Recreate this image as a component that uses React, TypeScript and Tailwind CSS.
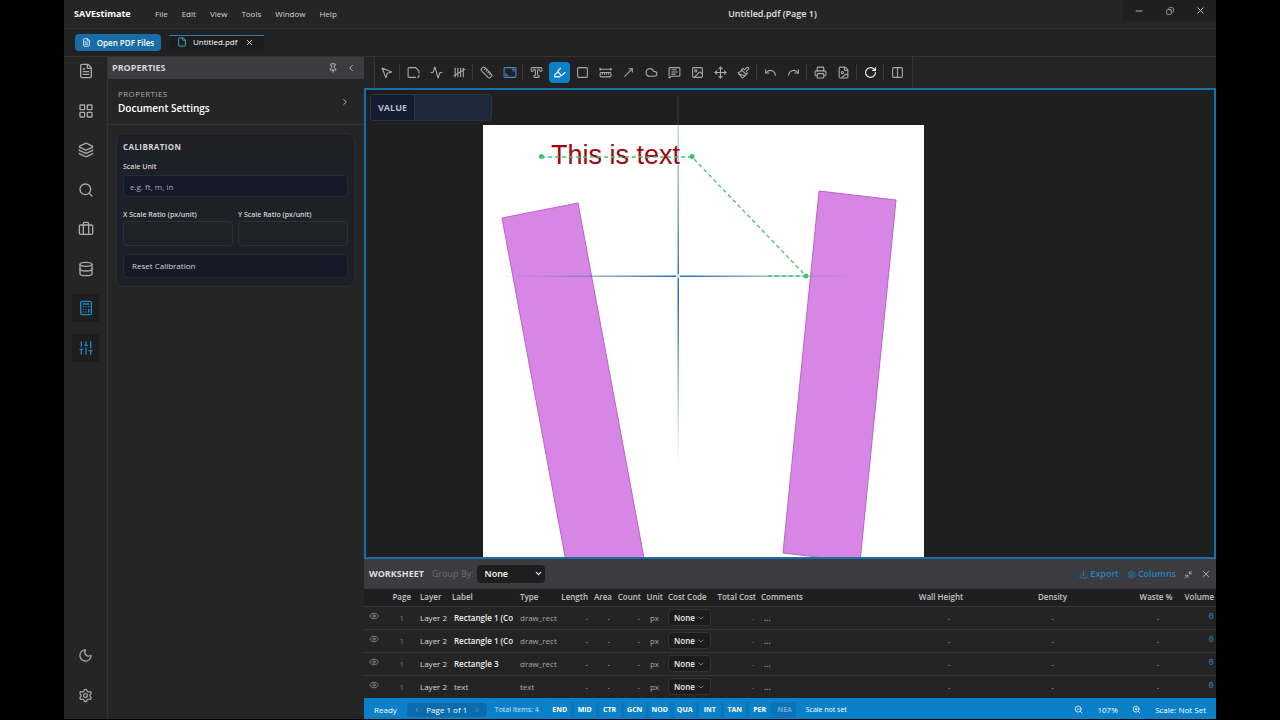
import type { ReactNode } from 'react';
import {
    Activity, Briefcase, Calculator, ChevronDown, ChevronLeft, ChevronRight, Cloud, Columns2, Copy,
    Database, Download, Eye, File, FileImage, FileText, Highlighter, Image, Layers, LayoutGrid, MessageSquareText,
    Minimize2, Minus, Moon, MousePointer2, Move, MoveUpRight, Paintbrush, Pin, Printer, Redo, RotateCw, Ruler,
    RulerDimensionLine, Search, Settings, SlidersVertical, Square, Tally5, TypeOutline, Undo, X, ZoomIn, ZoomOut,
} from 'lucide-react';

const AreaIcon = () => (
    <svg width="13" height="13" viewBox="0 0 24 24" fill="none" stroke="currentColor" strokeWidth="2" strokeLinecap="round" strokeLinejoin="round">
        <path d="M22 13V9l-6-6H4a2 2 0 0 0-2 2v14a2 2 0 0 0 2 2h12M22 17v2a2 2 0 0 1-2 2" />
    </svg>
);

const CalibrateIcon = () => (
    <svg width="14" height="13" viewBox="0 0 26 24" fill="none" stroke="currentColor" strokeWidth="2" strokeLinecap="round" strokeLinejoin="round">
        <rect x="2" y="3" width="22" height="18" rx="2" />
        <path d="M17 6h4v4zM5 14v4h4z" fill="currentColor" strokeWidth="1" />
    </svg>
);

const tools: { label: string; icon: ReactNode; tone?: string }[][] = [
    [{ label: 'Select', icon: <MousePointer2 size={13} /> }],
    [
        { label: 'Area', icon: <AreaIcon /> },
        { label: 'Polyline', icon: <Activity size={13} /> },
        { label: 'Count', icon: <Tally5 size={13} /> },
    ],
    [
        { label: 'Measure', icon: <Ruler size={13} /> },
        { label: 'Calibrate', icon: <CalibrateIcon />, tone: 'text-[#4a86d0]' },
    ],
    [
        { label: 'Text', icon: <TypeOutline size={13} /> },
        { label: 'Highlighter', icon: <Highlighter size={13} />, tone: 'bg-[#0a80c8] text-white' },
        { label: 'Rectangle', icon: <Square size={13} /> },
        { label: 'Dimension', icon: <RulerDimensionLine size={13} /> },
        { label: 'Arrow', icon: <MoveUpRight size={13} /> },
        { label: 'Cloud', icon: <Cloud size={13} /> },
        { label: 'Note', icon: <MessageSquareText size={13} /> },
        { label: 'Image', icon: <Image size={13} /> },
        { label: 'Move', icon: <Move size={13} /> },
        { label: 'Format', icon: <Paintbrush size={13} /> },
    ],
    [
        { label: 'Undo', icon: <Undo size={13} /> },
        { label: 'Redo', icon: <Redo size={13} /> },
    ],
    [
        { label: 'Print', icon: <Printer size={13} /> },
        { label: 'Export page', icon: <FileImage size={13} /> },
    ],
    [{ label: 'Refresh', icon: <RotateCw size={13} />, tone: 'text-white' }],
    [{ label: 'Split view', icon: <Columns2 size={13} /> }],
];

const sideItems = [
    { label: 'Files', icon: FileText },
    { label: 'Thumbnails', icon: LayoutGrid },
    { label: 'Layers', icon: Layers },
    { label: 'Search', icon: Search },
    { label: 'Projects', icon: Briefcase },
    { label: 'Database', icon: Database },
    { label: 'Worksheet', icon: Calculator, active: true },
    { label: 'Properties', icon: SlidersVertical, active: true },
];

const rows = [
    { label: 'Rectangle 1 (Copy)', type: 'draw_rect', bold: true },
    { label: 'Rectangle 1 (Copy)', type: 'draw_rect', bold: true },
    { label: 'Rectangle 3', type: 'draw_rect', bold: true },
    { label: 'text', type: 'text', bold: false },
];

const snaps = ['END', 'MID', 'CTR', 'GCN', 'NOD', 'QUA', 'INT', 'TAN', 'PER'];

function TitleBar() {
    return (
        <header className="flex h-[29px] shrink-0 items-center border-b border-[#333] pl-2.5">
            <div className="flex w-[348px] items-center">
                <h1 className="w-[81px] text-[9px] font-bold text-white">SAVEstimate</h1>
                <nav className="flex gap-3.5 text-[8px] font-medium text-[#d4d4d4]">
                    {['File', 'Edit', 'View', 'Tools', 'Window', 'Help'].map((item) => (
                        <button key={item}>{item}</button>
                    ))}
                </nav>
            </div>
            <div className="flex-1 text-center text-[9px] font-semibold text-[#e2e2e2]">Untitled.pdf (Page 1)</div>
            <div className="flex h-[21px] self-start bg-[#1f1f1f] text-[#ccc]">
                <button aria-label="Minimize" className="flex w-[31px] items-center justify-center"><Minus size={10} /></button>
                <button aria-label="Restore" className="flex w-[31px] items-center justify-center"><Copy size={8} className="-scale-x-100" /></button>
                <button aria-label="Close" className="flex w-[31px] items-center justify-center"><X size={11} /></button>
            </div>
        </header>
    );
}

function TabBar() {
    return (
        <div className="flex h-7 shrink-0 items-center border-b border-[#333] bg-[#212121] pl-[11px]">
            <button className="flex h-[17px] w-[86px] items-center justify-center gap-1.5 rounded-sm bg-[#186da8] text-[8px] font-semibold text-white">
                <FileText size={9} /> Open PDF Files
            </button>
            <div className="ml-2 flex h-4 w-[95px] items-center gap-1.5 border-t border-[#2d78b5] bg-[#1d1d1d] pb-0.5 pl-2 text-[8px] font-medium text-white">
                <File size={10} className="text-[#2fc7c4]" />
                Untitled.pdf
                <button aria-label="Close tab" className="ml-0.5"><X size={9} /></button>
            </div>
        </div>
    );
}

function SideBar() {
    return (
        <aside className="flex w-11 shrink-0 flex-col items-center border-r border-[#333] pb-2.5 text-[#aaa]">
            <div className="flex h-[305px] flex-col justify-between">
                {sideItems.map(({ label, icon: Icon, active }) => (
                    <button
                        key={label}
                        aria-label={label}
                        className={active ? 'flex h-7 w-[27px] items-center justify-center bg-[#1e1e1e] text-[#2186c8]' : 'flex h-7 w-[27px] items-center justify-center'}
                    >
                        <Icon size={16} />
                    </button>
                ))}
            </div>
            <div className="mt-auto flex flex-col gap-3">
                <button aria-label="Theme" className="flex h-7 w-[27px] items-center justify-center"><Moon size={15} /></button>
                <button aria-label="Settings" className="flex h-7 w-[27px] items-center justify-center"><Settings size={15} /></button>
            </div>
        </aside>
    );
}

function PropertiesPanel() {
    return (
        <section className="w-64 shrink-0">
            <div className="flex h-[22px] items-center bg-[#3c3c40] pr-2 pl-1 text-[#d4d4d4]">
                <h2 className="flex-1 text-[9px] font-bold">PROPERTIES</h2>
                <button aria-label="Pin panel" className="mr-2"><Pin size={10} /></button>
                <button aria-label="Collapse panel"><ChevronLeft size={10} /></button>
            </div>
            <div className="flex h-[46px] items-center border-b border-[#333] pr-3.5 pl-2.5">
                <div className="flex-1">
                    <div className="text-[8px] leading-3 tracking-wider text-[#aaa]">PROPERTIES</div>
                    <h3 className="text-[10px] leading-4 font-semibold text-white">Document Settings</h3>
                </div>
                <ChevronRight size={10} className="text-[#ccc]" />
            </div>
            <form className="mt-2 mr-[9px] ml-2 rounded-lg border border-[#2b2e37] bg-[#1e2027] px-1.5 pt-[7px] pb-2 text-[#d4d4d4]">
                <h4 className="text-[8px] leading-3 font-bold tracking-wider">CALIBRATION</h4>
                <label htmlFor="unit" className="mt-2 block text-[7px] leading-3 font-semibold">Scale Unit</label>
                <input id="unit" placeholder="e.g. ft, m, in" className="mt-0.5 block h-[22px] w-full rounded border border-[#262b3a] bg-[#151a28] px-1.5 text-[8px] placeholder:text-[#a5a8b0]" />
                <div className="mt-3 grid grid-cols-2 gap-[5px] text-[7px] font-semibold">
                    <label className="leading-3 whitespace-nowrap">
                        X Scale Ratio (px/unit)
                        <input className="block h-[25px] w-full rounded border border-[#2d3038] bg-[#1f2127]" />
                    </label>
                    <label className="leading-3 whitespace-nowrap">
                        Y Scale Ratio (px/unit)
                        <input className="block h-[25px] w-full rounded border border-[#2d3038] bg-[#1f2127]" />
                    </label>
                </div>
                <button type="button" className="mt-2 block h-6 w-full rounded border border-[#262b3a] bg-[#171a26] px-2 text-left text-[8px] font-medium">Reset Calibration</button>
            </form>
        </section>
    );
}

function ToolBar() {
    return (
        <div className="flex h-[31px] shrink-0 bg-[#242424]">
            <div className="ml-2.5 flex items-center gap-0.5 border-x border-[#333] bg-[#212121] pr-1 pb-px pl-px text-[#aaa]">
                {tools.map((group, index) => (
                    <div key={index} className="flex items-center gap-0.5">
                        {index > 0 && <span className="h-4 w-0.5 border-l border-[#3a3a3a]" />}
                        {group.map((tool) => (
                            <button
                                key={tool.label}
                                aria-label={tool.label}
                                className={`flex h-[21px] w-[21px] items-center justify-center rounded-sm ${tool.tone ?? ''}`}
                            >
                                {tool.icon}
                            </button>
                        ))}
                    </div>
                ))}
            </div>
        </div>
    );
}

function Canvas() {
    return (
        <div className="relative min-h-0 flex-1 overflow-hidden border-2 border-[#1b6fa8] bg-[#1f1f1f]">
            <svg className="absolute inset-0 h-full w-full">
                <defs>
                    <linearGradient id="hair-v" x1="0" y1="0" x2="0" y2="1">
                        <stop offset="0" stopColor="#3f7fb5" stopOpacity="0.3" />
                        <stop offset="0.5" stopColor="#2d6ca3" />
                        <stop offset="1" stopColor="#3f7fb5" stopOpacity="0" />
                    </linearGradient>
                    <linearGradient id="hair-h" x1="0" y1="0" x2="1" y2="0">
                        <stop offset="0" stopColor="#3f7fb5" stopOpacity="0" />
                        <stop offset="0.5" stopColor="#2d6ca3" />
                        <stop offset="1" stopColor="#3f7fb5" stopOpacity="0" />
                    </linearGradient>
                </defs>
                <rect x="117" y="35" width="441" height="520" fill="#fff" />
                <rect x="311" y="6" width="2" height="29" fill="#2b2b2b" />
                <g fill="#d886e6" stroke="#b765c4" strokeWidth="1">
                    <path d="M136 128L212 113L288 522L212 536Z" />
                    <path d="M453 101L530 110L494 472L417 463Z" />
                </g>
                <text x="185" y="74" fontSize="27" fill="#a00510" fontFamily="Liberation Sans, Arial, sans-serif">This is text</text>
                <rect x="311.5" y="35" width="1.5" height="340" fill="url(#hair-v)" />
                <rect x="132" y="185.5" width="360" height="1.5" fill="url(#hair-h)" />
                <circle cx="312" cy="186" r="2" fill="#dcebf7" />
                <path d="M175 67H326L440 186H400" fill="none" stroke="#46c070" strokeWidth="1.3" strokeDasharray="4 3" />
                <g fill="#3cc46c">
                    <circle cx="175.5" cy="66.5" r="2.5" />
                    <circle cx="326" cy="66.5" r="2.5" />
                    <circle cx="440" cy="186" r="2.5" />
                </g>
            </svg>
            <label className="absolute top-1 left-1 flex h-[27px] w-[122px] overflow-hidden rounded border border-[#2a3547] bg-[#1e2a3c] text-[9px] font-bold text-[#b5bcc8]">
                <span className="flex w-11 items-center justify-center border-r border-[#2a3547] bg-[#141d30]">VALUE</span>
                <input className="min-w-0 flex-1 px-1" />
            </label>
        </div>
    );
}

function Worksheet() {
    return (
        <section className="shrink-0">
            <div className="flex h-[30px] items-center bg-[#3c3c40] pr-[5px] pl-[5px] text-[9px]">
                <h2 className="font-bold text-[#ddd]">WORKSHEET</h2>
                <label htmlFor="group" className="ml-2 text-[#6c6c70]">Group By:</label>
                <div className="relative ml-[3px]">
                    <select id="group" className="h-[18px] w-[68px] appearance-none rounded-sm bg-[#1e1e1e] px-2 font-semibold text-white">
                        <option>None</option>
                    </select>
                    <ChevronDown size={9} className="pointer-events-none absolute top-1 right-0.5 text-white" strokeWidth={3} />
                </div>
                <div className="ml-auto flex items-center gap-2 font-semibold text-[#2582c4]">
                    <button className="flex items-center gap-0.5"><Download size={9} />Export</button>
                    <button className="flex items-center gap-0.5"><Settings size={9} />Columns</button>
                    <button aria-label="Shrink worksheet" className="text-[#bbb]"><Minimize2 size={9} /></button>
                    <button aria-label="Close worksheet" className="text-[#bbb]"><X size={10} /></button>
                </div>
            </div>
            <table className="w-full table-fixed bg-[#242424] text-[8px] text-[#a8a8a8]">
                <colgroup>
                    <col className="w-5" />
                    <col className="w-8" />
                    <col className="w-8" />
                    <col className="w-[68px]" />
                    <col className="w-[42px]" />
                    <col className="w-[30px]" />
                    <col className="w-6" />
                    <col className="w-[29px]" />
                    <col className="w-[22px]" />
                    <col className="w-12" />
                    <col className="w-[45px]" />
                    <col className="w-[141px]" />
                    <col className="w-[104px]" />
                    <col />
                    <col className="w-20" />
                    <col className="w-8" />
                </colgroup>
                <thead className="bg-[#1f1f1f] text-[#c4c4c4]">
                    <tr className="h-[17px] text-left whitespace-nowrap *:font-semibold">
                        <th aria-label="Visible" />
                        <th className="pr-[5px] text-right">Page</th>
                        <th className="pl-1">Layer</th>
                        <th className="pl-1">Label</th>
                        <th className="pl-1">Type</th>
                        <th className="text-right">Length</th>
                        <th className="text-right">Area</th>
                        <th className="text-right">Count</th>
                        <th className="text-right">Unit</th>
                        <th className="pl-[5px]">Cost Code</th>
                        <th className="text-right">Total Cost</th>
                        <th className="pl-[5px]">Comments</th>
                        <th className="pr-4 text-center">Wall Height</th>
                        <th className="text-center">Density</th>
                        <th className="pr-1 pl-7 text-center">Waste %</th>
                        <th className="pr-0.5 text-right">Volume</th>
                    </tr>
                </thead>
                <tbody>
                    {rows.map((row, index) => (
                        <tr key={index} className="h-[23px] border-t border-[#363636]">
                            <td className="pb-1"><Eye size={10} className="mx-auto text-[#888]" /></td>
                            <td className="pr-3 text-right text-[#777]">1</td>
                            <td className="pl-1 font-medium whitespace-nowrap text-[#ddd]">Layer 2</td>
                            <td className="pr-[3px] pl-1.5">
                                <input
                                    aria-label="Label"
                                    defaultValue={row.label}
                                    className={row.bold ? 'block w-full font-semibold text-[#eee]' : 'block w-full font-medium text-[#ccc]'}
                                />
                            </td>
                            <td className="pl-1 whitespace-nowrap">{row.type}</td>
                            <td className="text-right">-</td>
                            <td className="pr-0.5 text-right">-</td>
                            <td className="pr-px text-right">-</td>
                            <td className="pr-1 text-right">px</td>
                            <td className="relative pl-[5px]">
                                <select aria-label="Cost code" className="block h-[17px] w-[43px] appearance-none rounded-sm border border-[#333] bg-[#1c1c1c] pl-[5px] font-semibold text-[#eee]">
                                    <option>None</option>
                                </select>
                                <ChevronDown size={8} className="pointer-events-none absolute top-[7px] right-1.5" />
                            </td>
                            <td className="pr-0.5 text-right text-[#4a6d85]">-</td>
                            <td className="pl-2 font-semibold">...</td>
                            <td className="text-center">-</td>
                            <td className="text-center">-</td>
                            <td className="pl-7 text-center">-</td>
                            <td className="pr-0.5 text-right font-['Liberation_Mono',monospace] text-[9px] text-[#2582c4]">0</td>
                        </tr>
                    ))}
                </tbody>
            </table>
        </section>
    );
}

function StatusBar() {
    return (
        <footer className="flex h-[21px] shrink-0 items-center bg-[#0a80c8] px-2.5 pt-0.5 text-[8px] font-medium text-white">
            <span>Ready</span>
            <div className="ml-2.5 flex h-3.5 w-20 items-center justify-between rounded-sm bg-[#0b6cad] px-1.5">
                <button aria-label="Previous page"><ChevronLeft size={8} className="text-[#5aa6d8]" /></button>
                Page 1 of 1
                <button aria-label="Next page"><ChevronRight size={8} className="text-[#5aa6d8]" /></button>
            </div>
            <span className="ml-2 text-[7px] leading-4 text-[#d3e8f5]">Total Items: 4</span>
            <div className="ml-2.5 flex gap-[3px] bg-[#0a74b8] text-[7px] leading-4 font-bold">
                {snaps.map((snap) => (
                    <button key={snap} className="h-4 w-[22px] rounded-sm bg-[#0a80c8]">{snap}</button>
                ))}
                <button className="h-4 w-[22px] text-[#6ea9d0]">NEA</button>
            </div>
            <span className="ml-2.5 text-[7px] leading-4">Scale not set</span>
            <div className="ml-auto flex items-center">
                <button aria-label="Zoom out"><ZoomOut size={9} /></button>
                <span className="w-[49px] text-center">107%</span>
                <button aria-label="Zoom in"><ZoomIn size={9} /></button>
                <span className="ml-3.5">Scale: Not Set</span>
            </div>
        </footer>
    );
}

export default function App() {
    return (
        <div className="h-screen bg-black px-16 pb-px font-['Open_Sans','Segoe_UI',sans-serif]">
            <div className="flex h-full flex-col bg-[#252525]">
                <TitleBar />
                <TabBar />
                <div className="flex min-h-0 flex-1">
                    <SideBar />
                    <PropertiesPanel />
                    <main className="flex min-w-0 flex-1 flex-col">
                        <ToolBar />
                        <Canvas />
                        <Worksheet />
                        <StatusBar />
                    </main>
                </div>
            </div>
        </div>
    );
}
